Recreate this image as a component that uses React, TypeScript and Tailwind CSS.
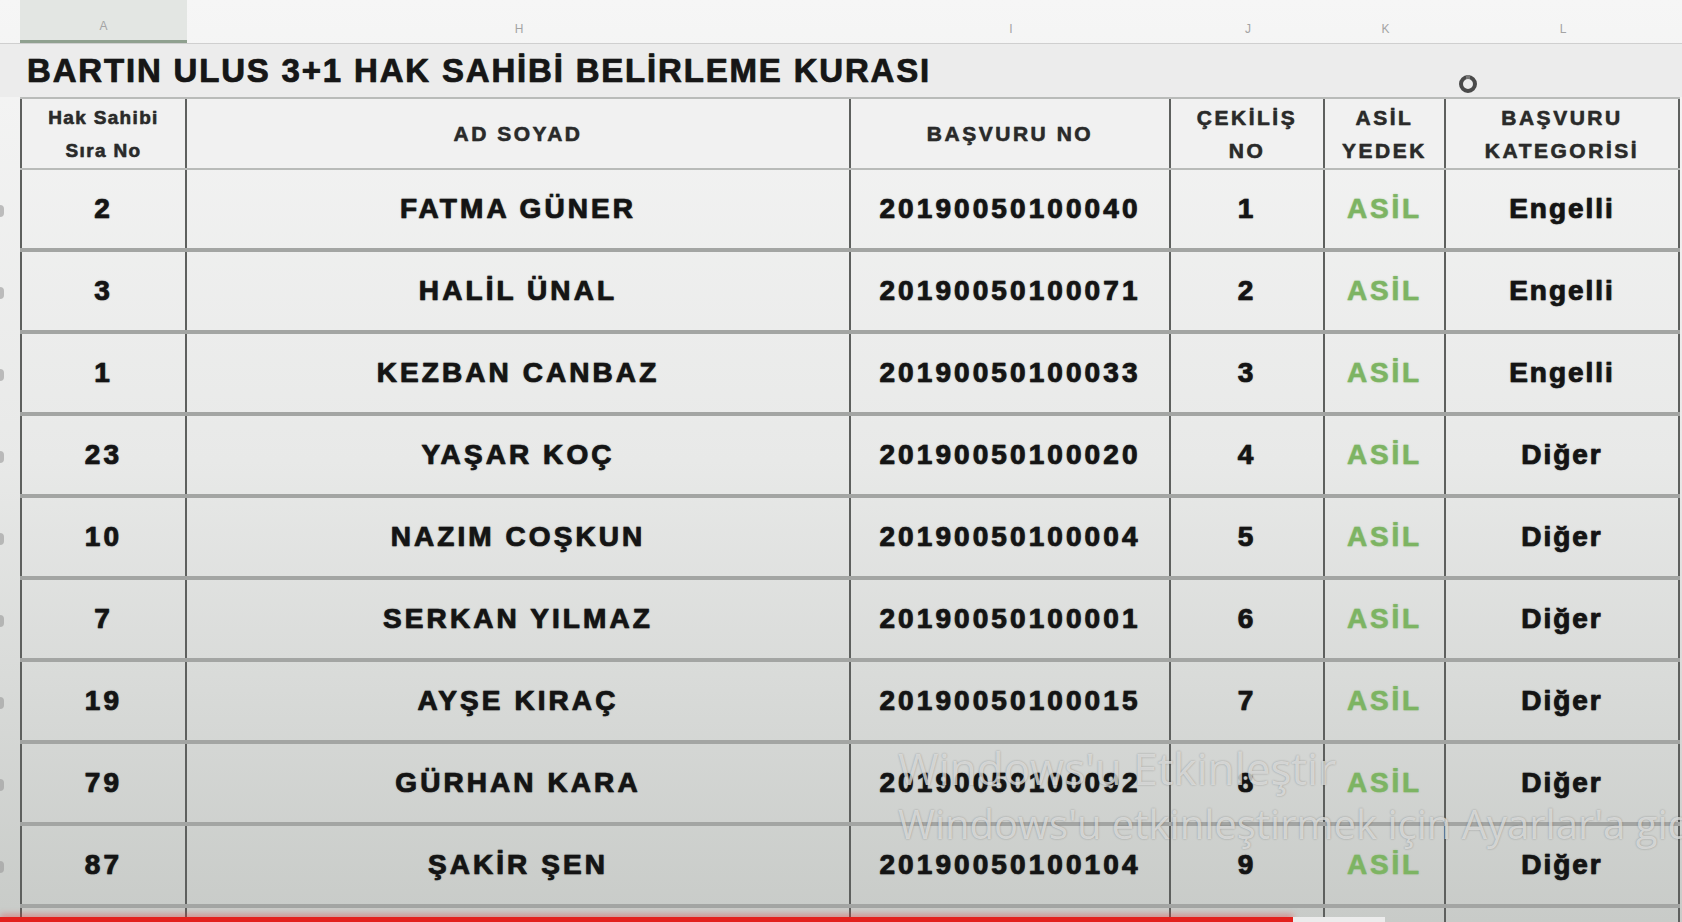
import React from 'react'

const cols = 'grid-cols-[167px_664px_320px_154px_121px_234px]'

const rows: [string, string, string, string, string][] = [
  ['2', 'FATMA GÜNER', '20190050100040', '1', 'Engelli'],
  ['3', 'HALİL ÜNAL', '20190050100071', '2', 'Engelli'],
  ['1', 'KEZBAN CANBAZ', '20190050100033', '3', 'Engelli'],
  ['23', 'YAŞAR KOÇ', '20190050100020', '4', 'Diğer'],
  ['10', 'NAZIM COŞKUN', '20190050100004', '5', 'Diğer'],
  ['7', 'SERKAN YILMAZ', '20190050100001', '6', 'Diğer'],
  ['19', 'AYŞE KIRAÇ', '20190050100015', '7', 'Diğer'],
  ['79', 'GÜRHAN KARA', '20190050100092', '8', 'Diğer'],
  ['87', 'ŞAKİR ŞEN', '20190050100104', '9', 'Diğer'],
]

const letters = ['A', 'H', 'I', 'J', 'K', 'L']

function Cell({ children, first }: { children?: React.ReactNode; first?: boolean }) {
  return (
    <div
      className={`flex items-center justify-center border-r-2 border-[#5e605e] ${first ? 'border-l-2' : ''}`}
    >
      {children}
    </div>
  )
}

function HeadText({ children, small }: { children: React.ReactNode; small?: boolean }) {
  return (
    <div
      className={`text-center font-bold leading-[33px] text-[#2a2a2a] [-webkit-text-stroke:0.4px_#2a2a2a] [text-shadow:0_0_1px_rgba(0,0,0,0.5)] ${
        small ? 'text-[19px] tracking-[0.07em]' : 'text-[21px] tracking-[0.12em]'
      }`}
    >
      {children}
    </div>
  )
}

export default function App() {
  return (
    <div className="relative flex h-[922px] w-[1682px] flex-col overflow-hidden bg-linear-to-b from-[#f6f6f6] via-[#e8e9e8] to-[#c8cbc8] font-['Liberation_Sans',Arial,sans-serif]">
      {/* column letters */}
      <div className="flex h-[43px] shrink-0">
        <div className="w-[20px]" />
        <div className={`grid ${cols} w-[1660px]`}>
          {letters.map((l, i) => (
            <div
              key={l}
              className={`flex items-end justify-center pb-[5px] text-[12px] text-[#a4a4a4] ${
                i === 0 ? 'border-b-[3px] border-[#8fa08f] bg-[#e3e6e3]' : ''
              }`}
            >
              {l}
            </div>
          ))}
        </div>
      </div>

      {/* title */}
      <div className="flex h-[54px] shrink-0 items-center border-t border-[#cfcfcf] bg-[#ececec] pl-[27px]">
        <span className="text-[33px] font-bold tracking-[0.055em] text-[#161616] [-webkit-text-stroke:0.6px_#161616] [text-shadow:0_0_1px_rgba(0,0,0,0.6)]">
          BARTIN ULUS 3+1 HAK SAHİBİ BELİRLEME KURASI
        </span>
      </div>

      {/* header */}
      <div className="flex shrink-0">
        <div className="w-[20px]" />
        <div className={`grid ${cols} h-[73px] w-[1660px] border-t-2 border-b-2 border-[#b9bbb9] bg-[#f1f1f1]`}>
          <Cell first>
            <HeadText small>
              Hak Sahibi
              <br />
              Sıra No
            </HeadText>
          </Cell>
          <Cell>
            <HeadText>AD SOYAD</HeadText>
          </Cell>
          <Cell>
            <HeadText>BAŞVURU NO</HeadText>
          </Cell>
          <Cell>
            <HeadText>
              ÇEKİLİŞ
              <br />
              NO
            </HeadText>
          </Cell>
          <Cell>
            <HeadText>
              ASİL
              <br />
              YEDEK
            </HeadText>
          </Cell>
          <Cell>
            <HeadText>
              BAŞVURU
              <br />
              KATEGORİSİ
            </HeadText>
          </Cell>
        </div>
      </div>

      {/* data rows */}
      {rows.map((r, i) => (
        <div key={i} className="flex shrink-0">
          <div className="flex w-[20px] items-center">
            <div className="h-[12px] w-[4px] rounded-r bg-[#9a9a9a]/60" />
          </div>
          <div className={`grid ${cols} h-[82px] w-[1660px] border-b-4 border-[#a3a5a3]`}>
            {[r[0], r[1], r[2], r[3]].map((v, j) => (
              <Cell key={j} first={j === 0}>
                <span className="text-[28px] font-bold tracking-[0.11em] text-[#141414] [-webkit-text-stroke:0.7px_#141414] [text-shadow:0_0_1.5px_rgba(0,0,0,0.7)]">
                  {v}
                </span>
              </Cell>
            ))}
            <Cell>
              <span className="text-[28px] font-bold tracking-[0.1em] text-[#7db463] [-webkit-text-stroke:0.5px_#7db463] [text-shadow:0_0_2px_rgba(125,180,99,0.6)]">
                ASİL
              </span>
            </Cell>
            <Cell>
              <span className="text-[28px] font-bold tracking-[0.07em] text-[#141414] [-webkit-text-stroke:0.7px_#141414] [text-shadow:0_0_1.5px_rgba(0,0,0,0.7)]">
                {r[4]}
              </span>
            </Cell>
          </div>
        </div>
      ))}

      {/* remaining strip */}
      <div className="flex flex-1">
        <div className="w-[20px]" />
        <div className={`grid ${cols} w-[1660px]`}>
          <Cell first />
          <Cell />
          <Cell />
          <Cell />
          <Cell />
          <Cell />
        </div>
      </div>

      {/* cursor */}
      <svg className="absolute left-[1457px] top-[73px]" width="22" height="22" viewBox="0 0 22 22">
        <circle cx="11" cy="11" r="7" fill="none" stroke="#4a4a4a" strokeWidth="4" />
        <rect x="9" y="2" width="4" height="4" fill="#777" />
      </svg>

      {/* windows watermark */}
      <div className="pointer-events-none absolute left-[898px] top-[738px] whitespace-nowrap font-['Open_Sans',sans-serif] text-[#e3e4e3]/80 [text-shadow:0_0_2px_rgba(0,0,0,0.3)]">
        <div className="text-[44px] leading-[60px]">Windows'u Etkinleştir</div>
        <div className="text-[40px] leading-[52px]">Windows'u etkinleştirmek için Ayarlar'a gidin.</div>
      </div>

      {/* progress bar */}
      <div className="absolute bottom-0 left-0 flex h-[5px] w-full">
        <div className="h-full w-[1293px] bg-[#e3211d] shadow-[0_-2px_6px_rgba(230,40,40,0.5)]" />
        <div className="h-full w-[92px] bg-[#ececec]" />
      </div>
    </div>
  )
}
